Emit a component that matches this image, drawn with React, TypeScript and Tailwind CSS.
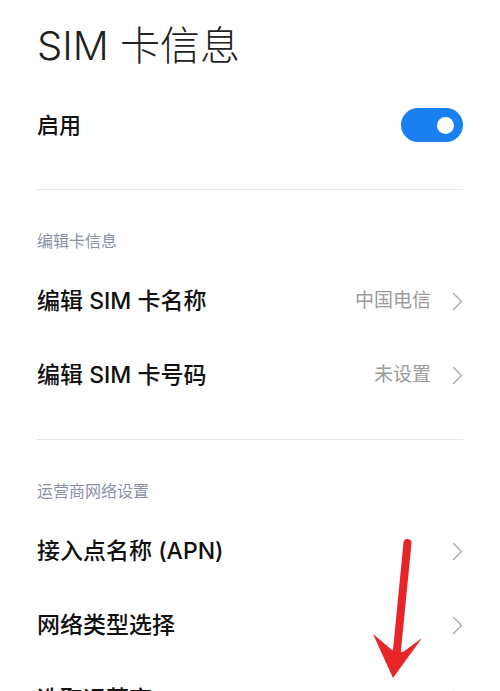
const font = {
  fontFamily: 'Inter, "Noto Sans CJK SC", "Noto Sans", sans-serif',
};

function Chevron() {
  return (
    <svg width="11" height="19" viewBox="0 0 11 19" className="shrink-0">
      <polyline
        points="1.5,1.5 9.5,9.5 1.5,17.5"
        fill="none"
        stroke="#a9a9a9"
        strokeWidth="1.4"
        strokeLinejoin="round"
        strokeLinecap="round"
      />
    </svg>
  );
}

function Toggle() {
  return (
    <div className="w-[62px] h-[34px] rounded-full bg-[#1a7ff0] flex items-center justify-end pr-[9px]">
      <div className="w-[17px] h-[17px] rounded-full bg-white" />
    </div>
  );
}

function SectionHeader({ title }: { title: string }) {
  return (
    <div className="pt-[41px] pb-[12px] text-[16px] leading-[20px] text-[#8a91a5]">
      {title}
    </div>
  );
}

function Row({ label, value }: { label: string; value?: string }) {
  return (
    <div className="h-[74px] flex items-center justify-between pt-[3px]">
      <span className="text-[23px] font-medium text-[#111] whitespace-pre">{label}</span>
      <div className="flex items-center gap-[21px]">
        {value && <span className="text-[19px] text-[#9b9b9b]">{value}</span>}
        <Chevron />
      </div>
    </div>
  );
}

function Arrow() {
  return (
    <svg
      className="absolute left-0 top-0 pointer-events-none"
      width="500"
      height="691"
      viewBox="0 0 500 691"
    >
      <line
        x1="407.5"
        y1="543"
        x2="396"
        y2="660"
        stroke="#e8262a"
        strokeWidth="8"
        strokeLinecap="round"
      />
      <polygon
        points="373,634 392,650 403,652 422,638 393,678"
        fill="#e8262a"
      />
    </svg>
  );
}

export default function App() {
  return (
    <div
      className="relative w-[500px] h-[691px] overflow-hidden bg-white px-[37px]"
      style={font}
    >
      <h1 className="pt-[22px] text-[40px] font-light leading-[48px] text-[#222]">
        SIM 卡信息
      </h1>

      <div className="mt-[18px] h-[74px] flex items-center justify-between">
        <span className="text-[22px] font-medium text-[#111]">启用</span>
        <Toggle />
      </div>

      <div className="mt-[27px] h-px bg-[#e6e6e6]" />

      <SectionHeader title="编辑卡信息" />
      <Row label="编辑 SIM 卡名称" value="中国电信" />
      <Row label="编辑 SIM 卡号码" value="未设置" />

      <div className="mt-[28px] h-px bg-[#e6e6e6]" />

      <SectionHeader title="运营商网络设置" />
      <Row label="接入点名称 (APN)" />
      <Row label="网络类型选择" />
      <Row label="选取运营商" />

      <Arrow />
    </div>
  );
}
